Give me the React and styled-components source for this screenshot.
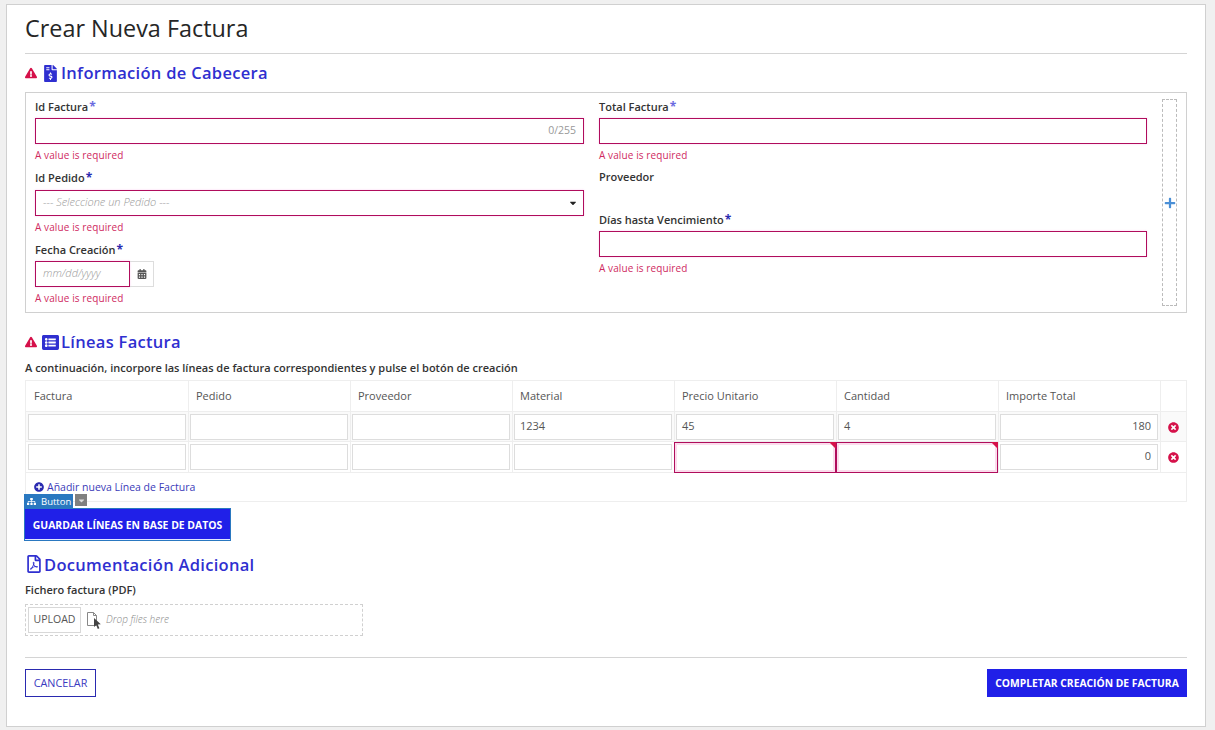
import React from "react";
import styled, { createGlobalStyle } from "styled-components";
import { FaCalendarAlt, FaExclamationTriangle, FaFileInvoiceDollar, FaListAlt, FaRegFilePdf, FaPlus, FaPlusCircle, FaTimesCircle, FaSitemap, FaCaretDown } from "react-icons/fa";

const blue = "#2f2fd0";
const crimson = "#b00d5c";
const red = "#d5114a";

const GlobalStyle = createGlobalStyle`
  html, body {
    margin: 0;
    padding: 0;
    background: #f0f0f0;
    font-family: "Open Sans", "Noto Sans", sans-serif;
    color: #333;
  }
  * { box-sizing: border-box; }
`;

const Page = styled.div`
  width: 1215px;
  height: 730px;
  padding: 4px 9px 3px 6px;
  overflow: hidden;
`;

const Card = styled.div`
  height: 723px;
  background: #fff;
  border: 1px solid #d0d0d0;
  padding: 0 18px;
  display: flex;
  flex-direction: column;
`;

const Title = styled.h1`
  margin: 0;
  height: 49px;
  border-bottom: 1px solid #d4d4d4;
  font-size: 23.4px;
  line-height: 47px;
  font-weight: 400;
  color: #262626;
`;

const SectionTitle = styled.h2`
  margin: ${(p) => p.$top}px 0 0;
  height: 24px;
  display: flex;
  align-items: center;
  font-size: 16.5px;
  line-height: 22px;
  font-weight: 600;
  letter-spacing: 0.3px;
  color: ${blue};
  & > svg { flex: none; }
`;

const TitleText = styled.span`
  margin-top: ${(p) => p.$shift || 0}px;
`;

const Warn = styled(FaExclamationTriangle)`
  color: ${red};
  font-size: 12px;
  margin-right: 5px;
`;

const InvoiceIcon = styled(FaFileInvoiceDollar)`
  font-size: 17px;
  margin-right: 2px;
`;

const HeaderBox = styled.div`
  margin-top: 7px;
  height: 221px;
  border: 1px solid #d0d0d0;
  padding: 6px 9px;
  display: grid;
  grid-template-columns: 549px 548px 15px;
  column-gap: 15px;
`;

const Column = styled.div`
  display: flex;
  flex-direction: column;
`;

const Field = styled.div`
  height: ${(p) => p.$h}px;
  display: flex;
  flex-direction: column;
`;

const Label = styled.label`
  height: ${(p) => p.$h || 19}px;
  font-size: 11px;
  line-height: 15px;
  font-weight: 600;
  color: #333;
`;

const Star = styled.span`
  color: ${(p) => p.$color || "#2a2ab0"};
  margin-left: 1px;
  font-size: 12px;
  font-weight: 700;
`;

const TextBox = styled.div`
  height: 26px;
  width: ${(p) => p.$w || "100%"};
  flex: none;
  border: 1px solid ${crimson};
  box-shadow: 0 0 2px rgba(240, 120, 220, 0.35);
  background: #fff;
  padding: 0 7px 3px;
  display: flex;
  align-items: center;
  justify-content: space-between;
  font-size: 10.5px;
  color: #999;
`;

const Placeholder = styled.span`
  font-size: 11px;
  font-style: italic;
  font-weight: 300;
  color: #999;
`;

const ErrorText = styled.div`
  margin-top: 4px;
  font-size: 10px;
  line-height: 14px;
  letter-spacing: 0.1px;
  color: #cf2a5f;
`;

const Caret = styled(FaCaretDown)`
  color: #222;
  font-size: 10px;
  margin: 2px -2px 0 0;
`;

const DateRow = styled.div`
  display: flex;
`;

const CalendarButton = styled.div`
  width: 24px;
  height: 26px;
  border: 1px solid #ddd;
  border-left: 0;
  display: flex;
  align-items: center;
  justify-content: center;
  color: #555;
  font-size: 10px;
`;

const AddColumn = styled.div`
  height: 207px;
  width: 15px;
  border: 1px dashed #bbb;
  display: flex;
  align-items: center;
  justify-content: center;
  color: #4a8fd6;
  font-size: 12px;
`;

const ListIcon = styled(FaListAlt)`
  font-size: 17px;
  margin-right: 2px;
`;

const Intro = styled.div`
  margin-top: 5px;
  height: 18px;
  font-size: 11px;
  line-height: 18px;
  font-weight: 600;
  color: #333;
`;

const Grid = styled.div`
  margin-top: 3px;
  border: 1px solid #eee;
  height: 122px;
`;

const Row = styled.div`
  display: grid;
  grid-template-columns: 163px repeat(6, 162px) 1fr;
  height: ${(p) => p.$h}px;
  border-bottom: 1px solid #eee;
  background: ${(p) => p.$bg || "#fff"};
`;

const HeadCell = styled.div`
  border-right: 1px solid #eee;
  padding-left: 7px;
  font-size: 11px;
  line-height: 30px;
  color: #555;
  &:first-child { padding-left: 8px; }
`;

const Cell = styled.div`
  border-right: 1px solid #eee;
  padding: ${(p) => (p.$invalid ? "0" : "2px 2px 2px 1px")};
  position: relative;
  &:first-child { padding-left: 2px; }
`;

const CellInput = styled.div`
  height: ${(p) => (p.$invalid ? "31px" : "26px")};
  margin-left: ${(p) => (p.$invalid ? "-1px" : "0")};
  border: 1px solid ${(p) => (p.$invalid ? crimson : "#ddd")};
  box-shadow: ${(p) => (p.$invalid ? "inset 0 0 0 2px #fbdcec" : "none")};
  background: #fff;
  padding: 0 6px 0 5px;
  font-size: 11px;
  line-height: 22px;
  color: #555;
  text-align: ${(p) => (p.$right ? "right" : "left")};
`;

const Corner = styled.span`
  position: absolute;
  top: 0;
  right: 0;
  width: 0;
  height: 0;
  border-top: 7px solid ${red};
  border-left: 7px solid transparent;
`;

const RemoveCell = styled.div`
  display: flex;
  align-items: center;
  justify-content: center;
  color: ${red};
  font-size: 11px;
`;

const AddLine = styled.div`
  height: 27px;
  padding: 6px 0 0 8px;
  display: flex;
  align-items: flex-start;
  gap: 3px;
  font-size: 10.5px;
  line-height: 16px;
  color: #3a3ab8;
  & > svg { margin-top: 3px; font-size: 10px; color: #2a2ab0; }
`;

const SaveWrap = styled.div`
  margin: 6px 0 0 -1px;
  position: relative;
  align-self: flex-start;
`;

const SaveButton = styled.button`
  display: block;
  width: 207px;
  height: 33px;
  background: #2020e8;
  border: 1px solid #2a78c0;
  box-shadow: inset 0 -1px 0 #dfe8ff;
  color: #fff;
  font-family: inherit;
  font-size: 10.4px;
  font-weight: 700;
  padding: 0;
`;

const DevBadge = styled.div`
  position: absolute;
  left: 0;
  top: -14px;
  width: 49px;
  height: 14px;
  background: #2a78c0;
  color: #fff;
  font-size: 9.5px;
  line-height: 15px;
  padding-left: 17px;
  & > svg { position: absolute; left: 3px; top: 3px; font-size: 9px; }
`;

const DevMenu = styled.div`
  position: absolute;
  left: 51px;
  top: -14px;
  width: 12px;
  height: 12px;
  background: #808080;
  color: #ddd;
  display: flex;
  align-items: center;
  justify-content: center;
  font-size: 9px;
`;

const DocIcon = styled(FaRegFilePdf)`
  font-size: 18px;
  margin-right: 1px;
`;

const FileLabel = styled.div`
  margin-top: 4px;
  height: 24px;
  font-size: 11px;
  line-height: 20px;
  font-weight: 600;
  color: #333;
`;

const DropZone = styled.div`
  width: 338px;
  height: 32px;
  border: 1px dashed #d0d0d0;
  padding: 2px;
  display: flex;
  align-items: center;
`;

const UploadButton = styled.div`
  width: 53px;
  height: 26px;
  border: 1px solid #d8d8d8;
  font-size: 10.5px;
  line-height: 23px;
  text-align: center;
  color: #555;
`;

const DropIcon = styled.svg`
  margin: 3px 0 0 6px;
  width: 14px;
  height: 19px;
  flex: none;
`;

const DropText = styled.span`
  margin-left: 5px;
  padding-bottom: 3px;
  font-size: 10px;
  font-style: italic;
  font-weight: 300;
  color: #888;
`;

const Footer = styled.div`
  margin-top: 21px;
  padding-top: 11px;
  border-top: 1px solid #d4d4d4;
  display: flex;
  justify-content: space-between;
`;

const CancelButton = styled.button`
  width: 71px;
  height: 28px;
  background: #fff;
  border: 1px solid #2a2ab0;
  color: #3a3ac0;
  font-family: inherit;
  font-size: 10.8px;
  padding: 0 0 2px;
`;

const CompleteButton = styled.button`
  width: 200px;
  height: 28px;
  background: #2020e8;
  border: 0;
  color: #fff;
  font-family: inherit;
  font-size: 10.3px;
  font-weight: 700;
  padding: 0;
`;

const columns = ["Factura", "Pedido", "Proveedor", "Material", "Precio Unitario", "Cantidad", "Importe Total"];

const lines = [
  { values: ["", "", "", "1234", "45", "4", "180"], h: 30, bg: "#fafafa" },
  { values: ["", "", "", "", "", "", "0"], h: 31, invalid: [4, 5] },
];

const Required = () => <ErrorText>A value is required</ErrorText>;

const App = () => (
  <Page>
    <GlobalStyle />
    <Card>
      <Title>Crear Nueva Factura</Title>

      <SectionTitle $top={7}>
        <Warn />
        <InvoiceIcon />
        <TitleText $shift={-1}>Información de Cabecera</TitleText>
      </SectionTitle>
      <HeaderBox>
        <Column>
          <Field $h={71}>
            <Label>Id Factura<Star $color="#6a6ae0">*</Star></Label>
            <TextBox>
              <span />
              <span>0/255</span>
            </TextBox>
            <Required />
          </Field>
          <Field $h={72}>
            <Label $h={20}>Id Pedido<Star>*</Star></Label>
            <TextBox>
              <Placeholder>--- Seleccione un Pedido ---</Placeholder>
              <Caret />
            </TextBox>
            <Required />
          </Field>
          <Field $h={64}>
            <Label>Fecha Creación<Star>*</Star></Label>
            <DateRow>
              <TextBox $w="95px">
                <Placeholder>mm/dd/yyyy</Placeholder>
              </TextBox>
              <CalendarButton>
                <FaCalendarAlt />
              </CalendarButton>
            </DateRow>
            <Required />
          </Field>
        </Column>
        <Column>
          <Field $h={70}>
            <Label>Total Factura<Star $color="#6a6ae0">*</Star></Label>
            <TextBox />
            <Required />
          </Field>
          <Field $h={43}>
            <Label>Proveedor</Label>
          </Field>
          <Field $h={64}>
            <Label>Días hasta Vencimiento<Star>*</Star></Label>
            <TextBox />
            <Required />
          </Field>
        </Column>
        <AddColumn>
          <FaPlus />
        </AddColumn>
      </HeaderBox>

      <SectionTitle $top={17}>
        <Warn />
        <ListIcon />
        <TitleText $shift={-1}>Líneas Factura</TitleText>
      </SectionTitle>
      <Intro>A continuación, incorpore las líneas de factura correspondientes y pulse el botón de creación</Intro>
      <Grid>
        <Row $h={31}>
          {columns.map((c) => (
            <HeadCell key={c}>{c}</HeadCell>
          ))}
        </Row>
        {lines.map((line, i) => (
          <Row key={i} $h={line.h} $bg={line.bg}>
            {line.values.map((v, j) => {
              const invalid = line.invalid && line.invalid.includes(j);
              return (
                <Cell key={j} $invalid={invalid}>
                  <CellInput $invalid={invalid} $right={j === 6}>{v}</CellInput>
                  {invalid && <Corner />}
                </Cell>
              );
            })}
            <RemoveCell>
              <FaTimesCircle />
            </RemoveCell>
          </Row>
        ))}
        <AddLine>
          <FaPlusCircle />
          Añadir nueva Línea de Factura
        </AddLine>
      </Grid>
      <SaveWrap>
        <DevBadge>
          <FaSitemap />
          Button
        </DevBadge>
        <DevMenu>
          <FaCaretDown />
        </DevMenu>
        <SaveButton>GUARDAR LÍNEAS EN BASE DE DATOS</SaveButton>
      </SaveWrap>

      <SectionTitle $top={11}>
        <DocIcon />
        <TitleText $shift={2}>Documentación Adicional</TitleText>
      </SectionTitle>
      <FileLabel>Fichero factura (PDF)</FileLabel>
      <DropZone>
        <UploadButton>UPLOAD</UploadButton>
        <DropIcon viewBox="0 0 14 19">
          <path d="M.5.5h6l3 3v10h-9z M6.5.5v3h3" fill="none" stroke="#888" />
          <path d="M7 6l0 9 2.2-2 1.6 4 1.6-.7-1.6-3.8 3-.2z" fill="#444" />
        </DropIcon>
        <DropText>Drop files here</DropText>
      </DropZone>

      <Footer>
        <CancelButton>CANCELAR</CancelButton>
        <CompleteButton>COMPLETAR CREACIÓN DE FACTURA</CompleteButton>
      </Footer>
    </Card>
  </Page>
);

export default App;
